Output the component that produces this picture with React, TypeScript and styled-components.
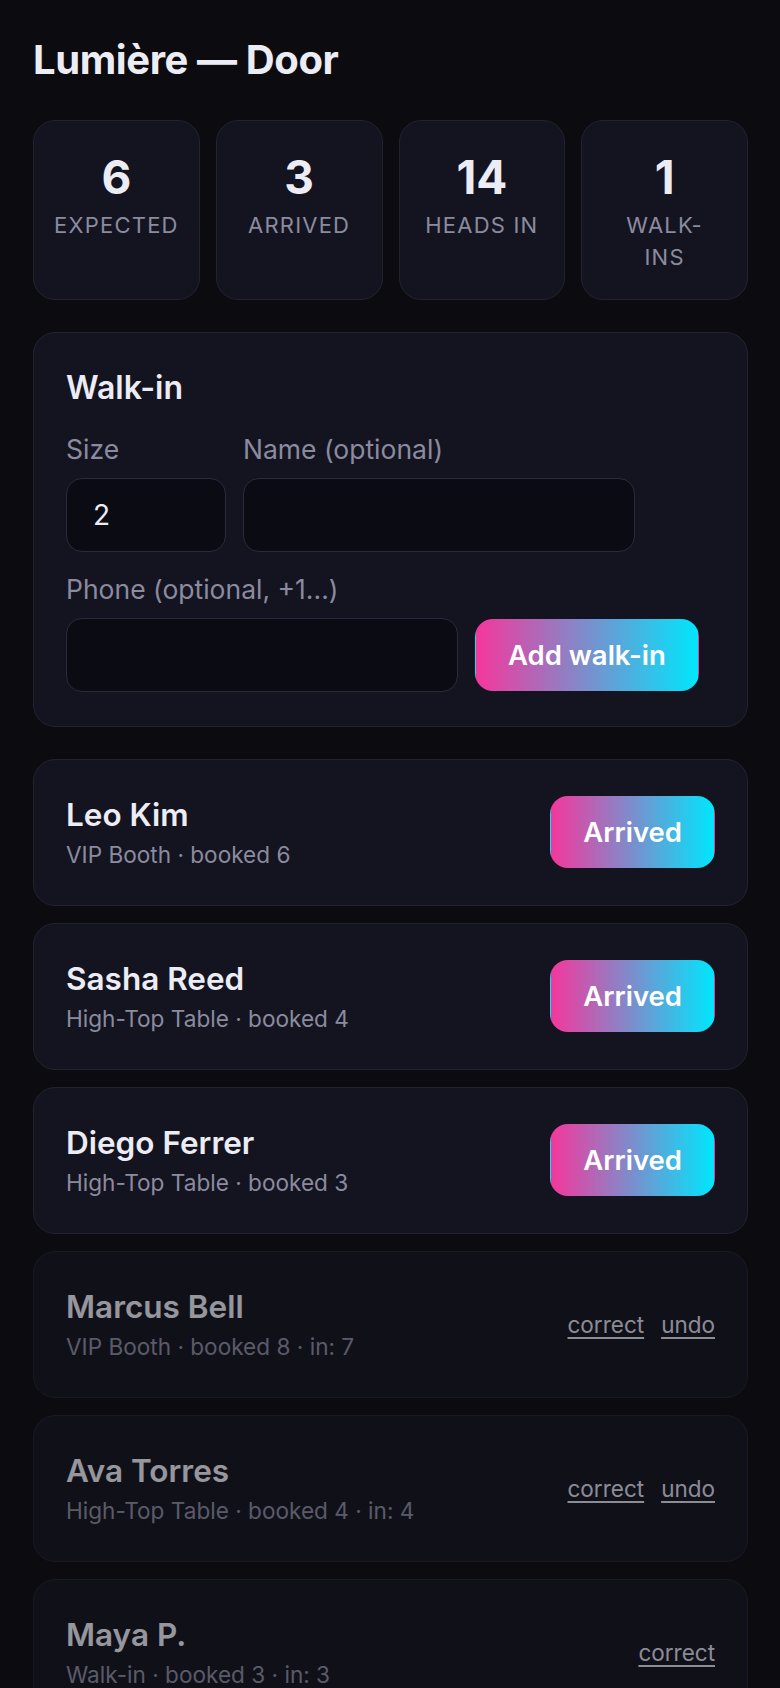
import React from "react";
import styled, { createGlobalStyle } from "styled-components";

const GlobalStyle = createGlobalStyle`
  html, body {
    margin: 0;
    padding: 0;
    background: #0b0b10;
  }
  body {
    font-family: Inter, "Noto Sans", "Liberation Sans", sans-serif;
    color: #ececf4;
    line-height: 1.5;
  }
  * { box-sizing: border-box; }
`;

const Page = styled.main`
  display: flex;
  flex-direction: column;
  gap: 32px;
  padding: 32px 32px 48px 33px;
  min-height: 1688px;
  background: #0b0b10;
`;

const Title = styled.h1`
  margin: 0;
  font-size: 40px;
  font-weight: 700;
  line-height: 56px;
  letter-spacing: -0.01em;
  color: #ececf4;
`;

const StatGrid = styled.section`
  display: grid;
  grid-template-columns: repeat(4, 1fr);
  gap: 16px;
`;

const StatBox = styled.div`
  display: flex;
  flex-direction: column;
  align-items: center;
  text-align: center;
  padding: 24px 18px 26px;
  background: #141420;
  border: 1px solid #22232f;
  border-radius: 22px;
`;

const StatValue = styled.div`
  font-size: 46px;
  font-weight: 700;
  line-height: 1.4;
  color: #ececf4;
`;

const StatLabel = styled.div`
  font-size: 22px;
  line-height: 32px;
  letter-spacing: 0.055em;
  text-transform: uppercase;
  white-space: pre-line;
  color: #8b8b9f;
`;

const Card = styled.section`
  padding: 32px 32px 34px;
  background: #141420;
  border: 1px solid #22232f;
  border-radius: 22px;
`;

const CardTitle = styled.h2`
  margin: 0 0 20px;
  font-size: 32px;
  font-weight: 600;
  line-height: 45px;
  color: #ececf4;
`;

const Form = styled.div`
  display: flex;
  flex-wrap: wrap;
  align-items: flex-end;
  column-gap: 17px;
  row-gap: 18px;
`;

const Field = styled.label<{ $width: number }>`
  display: flex;
  flex-direction: column;
  gap: 9px;
  width: ${(p) => p.$width}px;
`;

const FieldLabel = styled.span`
  font-size: 26.5px;
  line-height: 39px;
  color: #8b8b9f;
`;

const Input = styled.input`
  height: 74px;
  width: 100%;
  padding: 0 26px;
  font-family: inherit;
  font-size: 28px;
  color: #ececf4;
  background: #0b0b13;
  border: 1px solid #2a2b3a;
  border-radius: 16px;
  outline: none;
`;

const GradientButton = styled.button`
  padding: 14px 32px;
  font-family: inherit;
  font-size: 27.5px;
  font-weight: 600;
  line-height: 42px;
  color: #ffffff;
  border: 1px solid transparent;
  border-radius: 18px;
  background: linear-gradient(90deg, #f5379c 0%, #00e6fd 100%);
  cursor: pointer;
  white-space: nowrap;
  margin-bottom: 1px;
`;

const List = styled.section`
  display: flex;
  flex-direction: column;
  gap: 17px;
`;

const GuestCard = styled.article<{ $done: boolean }>`
  display: flex;
  align-items: center;
  justify-content: space-between;
  gap: 16px;
  padding: 32px;
  background: #141420;
  border: 1px solid #22232f;
  border-radius: 22px;
  opacity: ${(p) => (p.$done ? 0.62 : 1)};
`;

const GuestInfo = styled.div`
  display: flex;
  flex-direction: column;
`;

const GuestName = styled.div`
  font-size: 31.5px;
  font-weight: 600;
  line-height: 45px;
  color: #ececf4;
`;

const GuestMeta = styled.div`
  font-size: 22.6px;
  line-height: 36px;
  color: #8b8b9f;
`;

const Actions = styled.div`
  display: flex;
  align-items: center;
  gap: 17px;
`;

const LinkButton = styled.button`
  padding: 0;
  font-family: inherit;
  font-size: 22.5px;
  line-height: 36px;
  color: #dcdce6;
  text-decoration: underline;
  text-underline-offset: 4px;
  background: none;
  border: none;
  cursor: pointer;
`;

type Guest = {
  name: string;
  table: string;
  booked: number;
  inCount?: number;
  canUndo?: boolean;
};

const stats = [
  { value: 6, label: "Expected" },
  { value: 3, label: "Arrived" },
  { value: 14, label: "Heads in" },
  { value: 1, label: "Walk-\nins" },
];

const guests: Guest[] = [
  { name: "Leo Kim", table: "VIP Booth", booked: 6 },
  { name: "Sasha Reed", table: "High-Top Table", booked: 4 },
  { name: "Diego Ferrer", table: "High-Top Table", booked: 3 },
  { name: "Marcus Bell", table: "VIP Booth", booked: 8, inCount: 7, canUndo: true },
  { name: "Ava Torres", table: "High-Top Table", booked: 4, inCount: 4, canUndo: true },
  { name: "Maya P.", table: "Walk-in", booked: 3, inCount: 3, canUndo: false },
];

export default function App() {
  return (
    <>
      <GlobalStyle />
      <Page>
        <Title>Lumière — Door</Title>

        <StatGrid>
          {stats.map((s) => (
            <StatBox key={s.label}>
              <StatValue>{s.value}</StatValue>
              <StatLabel>{s.label}</StatLabel>
            </StatBox>
          ))}
        </StatGrid>

        <Card>
          <CardTitle>Walk-in</CardTitle>
          <Form>
            <Field $width={160}>
              <FieldLabel>Size</FieldLabel>
              <Input defaultValue="2" />
            </Field>
            <Field $width={392}>
              <FieldLabel>Name (optional)</FieldLabel>
              <Input />
            </Field>
            <Field $width={392}>
              <FieldLabel>Phone (optional, +1...)</FieldLabel>
              <Input />
            </Field>
            <GradientButton>Add walk-in</GradientButton>
          </Form>
        </Card>

        <List>
          {guests.map((g) => {
            const done = g.inCount !== undefined;
            const meta = [g.table, `booked ${g.booked}`];
            if (done) meta.push(`in: ${g.inCount}`);
            return (
              <GuestCard key={g.name} $done={done}>
                <GuestInfo>
                  <GuestName>{g.name}</GuestName>
                  <GuestMeta>{meta.join(" · ")}</GuestMeta>
                </GuestInfo>
                {done ? (
                  <Actions>
                    <LinkButton>correct</LinkButton>
                    {g.canUndo && <LinkButton>undo</LinkButton>}
                  </Actions>
                ) : (
                  <GradientButton>Arrived</GradientButton>
                )}
              </GuestCard>
            );
          })}
        </List>
      </Page>
    </>
  );
}
